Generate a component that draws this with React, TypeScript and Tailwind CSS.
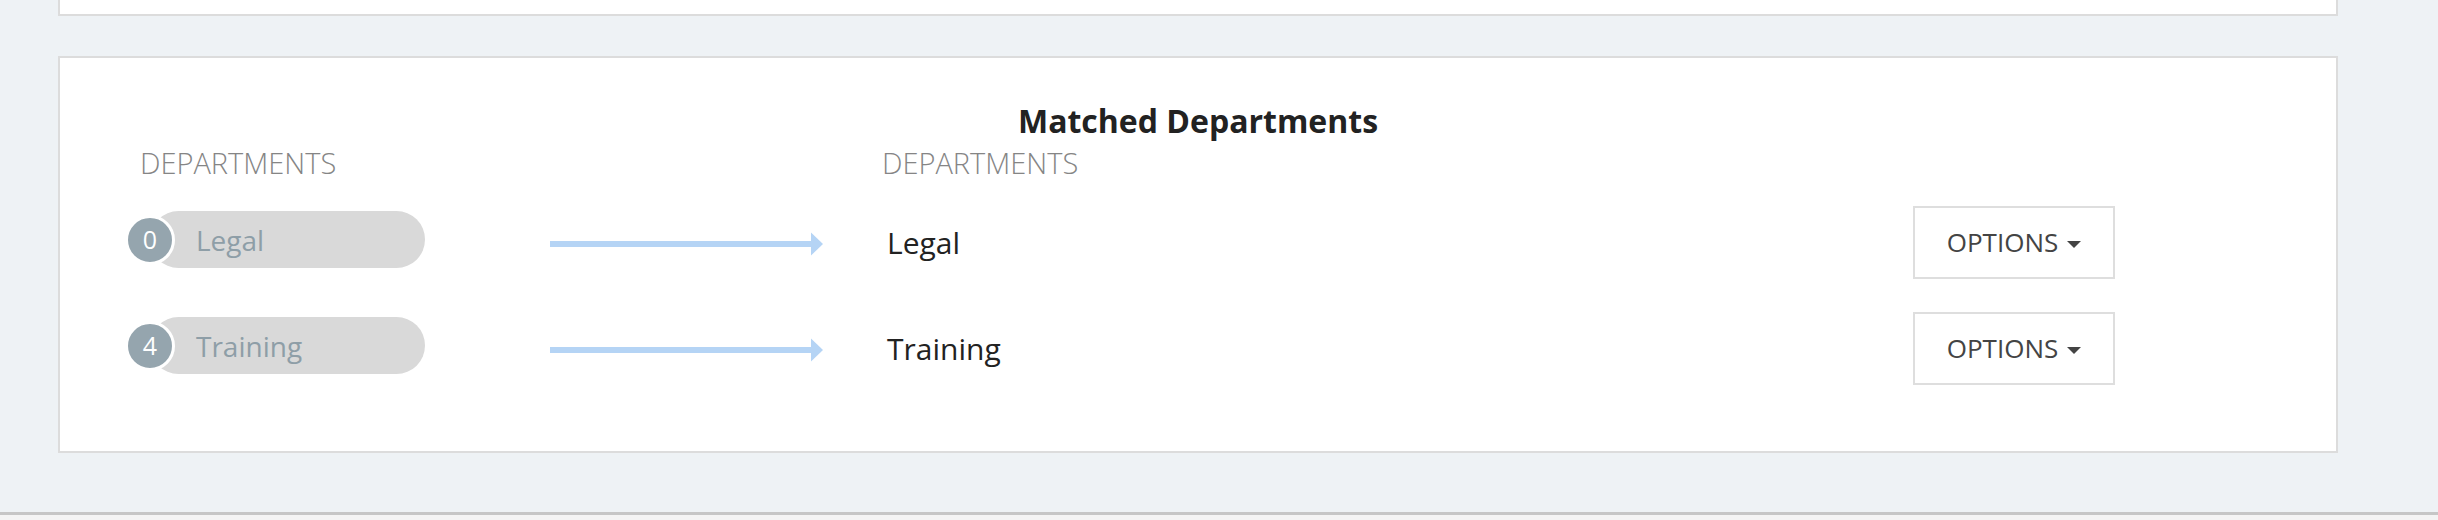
const departments = [
  { count: 0, name: "Legal", match: "Legal" },
  { count: 4, name: "Training", match: "Training" },
];

function Arrow() {
  return (
    <svg width="273" height="24" viewBox="0 0 273 24" className="block">
      <rect x="0" y="9" width="263" height="6" fill="#b5d4f5" />
      <polygon points="261,0.5 273,12 261,23.5" fill="#b5d4f5" />
    </svg>
  );
}

function Pill({ count, name }: { count: number; name: string }) {
  return (
    <div className="flex items-center w-[300px] mb-[6px]">
      <div className="relative z-10 flex h-[50px] w-[50px] shrink-0 items-center justify-center rounded-full border-[3px] border-white bg-[#95a5ae] text-[25px] leading-none text-white">
        {count}
      </div>
      <div className="-ml-[25px] flex h-[57px] w-[275px] items-center rounded-full bg-[#d9d9d9] pl-[46px] text-[28px] leading-[36px] text-[#8e9ea7]">
        {name}
      </div>
    </div>
  );
}

function OptionsButton() {
  return (
    <button className="flex h-[73px] w-[202px] shrink-0 items-center justify-center gap-[9px] border-2 border-[#dedede] bg-white text-[26px] text-[#444]">
      OPTIONS
      <span className="mt-[3px] h-0 w-0 border-x-[7px] border-t-[7px] border-x-transparent border-t-[#444]" />
    </button>
  );
}

export default function App() {
  return (
    <div className="flex min-h-[520px] flex-col bg-[#eef2f5] font-['Open_Sans',sans-serif]">
      <div className="ml-[58px] h-[16px] w-[2280px] border-x-2 border-b-2 border-[#dcdcdc] bg-white" />

      <div className="mt-[40px] ml-[58px] w-[2280px] border-2 border-[#dcdcdc] bg-white pt-[43px] pb-[66px] pl-[65px] pr-[221px]">
        <h2 className="-ml-[65px] -mr-[221px] text-center text-[32px] font-bold leading-[40px] text-[#222]">
          Matched Departments
        </h2>

        <div className="mt-[4px] flex text-[29px] font-light leading-[36px] text-[#858585]">
          <div className="w-[757px] pl-[15px]">DEPARTMENTS</div>
          <div>DEPARTMENTS</div>
        </div>

        <div className="mt-[25px] flex flex-col gap-[33px]">
          {departments.map((d) => (
            <div key={d.name} className="flex h-[73px] items-center">
              <Pill count={d.count} name={d.name} />
              <div className="ml-[125px] mt-[3px]">
                <Arrow />
              </div>
              <div className="ml-[64px] flex-1 text-[30px] leading-[40px] text-[#222]">
                {d.match}
              </div>
              <OptionsButton />
            </div>
          ))}
        </div>
      </div>

      <div className="mt-[59px] border-t-[3px] border-[#c6c6c6] bg-[#f4f4f4] flex-1" />
    </div>
  );
}
